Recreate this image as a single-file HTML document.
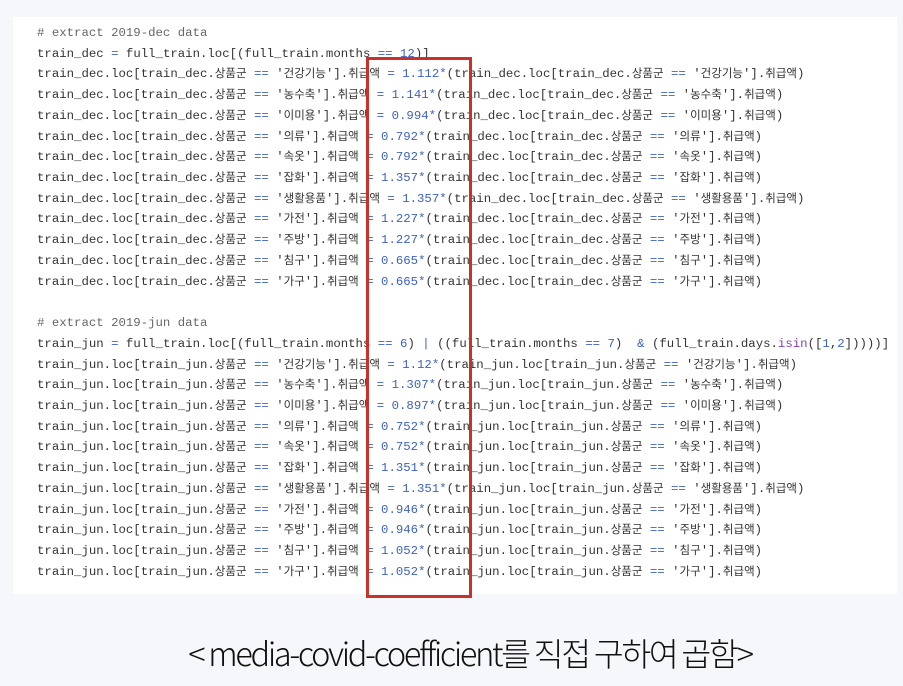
<!DOCTYPE html>
<html><head><meta charset="utf-8"><style>
html,body{margin:0;padding:0;}
body{width:903px;height:686px;background:#f6f7fa;position:relative;overflow:hidden;}
.panel{position:absolute;left:13px;top:17px;width:884px;height:577px;background:#fff;}
pre{position:absolute;left:37px;top:23px;margin:0;font-family:"Liberation Mono",monospace;font-size:12.35px;line-height:20.72px;color:#333;}
pre k{font-family:"Noto Sans CJK KR",sans-serif;font-size:11.5px;line-height:0;}
.o{color:#3d62c4}.c{color:#666}.p{color:#8a3fb0}
.box{position:absolute;left:366px;top:57px;width:100px;height:535px;border:3px solid #c9322a;}
.cap{position:absolute;left:0;width:940px;top:630px;text-align:center;font-family:"Noto Sans CJK KR",sans-serif;font-weight:300;font-size:32.5px;letter-spacing:-2.3px;color:#111;line-height:46px;}
</style></head><body>
<div class="panel"></div>
<pre><span class="c"># extract 2019-dec data</span>
train_dec <span class="o">=</span> full_train.loc[(full_train.months <span class="o">==</span> <span class="o">12</span>)]
train_dec.loc[train_dec.<k>상품군</k> <span class="o">==</span> '<k>건강기능</k>'].<k>취급액</k> <span class="o">=</span> <span class="o">1.112</span><span class="o">*</span>(train_dec.loc[train_dec.<k>상품군</k> <span class="o">==</span> '<k>건강기능</k>'].<k>취급액</k>)
train_dec.loc[train_dec.<k>상품군</k> <span class="o">==</span> '<k>농수축</k>'].<k>취급액</k> <span class="o">=</span> <span class="o">1.141</span><span class="o">*</span>(train_dec.loc[train_dec.<k>상품군</k> <span class="o">==</span> '<k>농수축</k>'].<k>취급액</k>)
train_dec.loc[train_dec.<k>상품군</k> <span class="o">==</span> '<k>이미용</k>'].<k>취급액</k> <span class="o">=</span> <span class="o">0.994</span><span class="o">*</span>(train_dec.loc[train_dec.<k>상품군</k> <span class="o">==</span> '<k>이미용</k>'].<k>취급액</k>)
train_dec.loc[train_dec.<k>상품군</k> <span class="o">==</span> '<k>의류</k>'].<k>취급액</k> <span class="o">=</span> <span class="o">0.792</span><span class="o">*</span>(train_dec.loc[train_dec.<k>상품군</k> <span class="o">==</span> '<k>의류</k>'].<k>취급액</k>)
train_dec.loc[train_dec.<k>상품군</k> <span class="o">==</span> '<k>속옷</k>'].<k>취급액</k> <span class="o">=</span> <span class="o">0.792</span><span class="o">*</span>(train_dec.loc[train_dec.<k>상품군</k> <span class="o">==</span> '<k>속옷</k>'].<k>취급액</k>)
train_dec.loc[train_dec.<k>상품군</k> <span class="o">==</span> '<k>잡화</k>'].<k>취급액</k> <span class="o">=</span> <span class="o">1.357</span><span class="o">*</span>(train_dec.loc[train_dec.<k>상품군</k> <span class="o">==</span> '<k>잡화</k>'].<k>취급액</k>)
train_dec.loc[train_dec.<k>상품군</k> <span class="o">==</span> '<k>생활용품</k>'].<k>취급액</k> <span class="o">=</span> <span class="o">1.357</span><span class="o">*</span>(train_dec.loc[train_dec.<k>상품군</k> <span class="o">==</span> '<k>생활용품</k>'].<k>취급액</k>)
train_dec.loc[train_dec.<k>상품군</k> <span class="o">==</span> '<k>가전</k>'].<k>취급액</k> <span class="o">=</span> <span class="o">1.227</span><span class="o">*</span>(train_dec.loc[train_dec.<k>상품군</k> <span class="o">==</span> '<k>가전</k>'].<k>취급액</k>)
train_dec.loc[train_dec.<k>상품군</k> <span class="o">==</span> '<k>주방</k>'].<k>취급액</k> <span class="o">=</span> <span class="o">1.227</span><span class="o">*</span>(train_dec.loc[train_dec.<k>상품군</k> <span class="o">==</span> '<k>주방</k>'].<k>취급액</k>)
train_dec.loc[train_dec.<k>상품군</k> <span class="o">==</span> '<k>침구</k>'].<k>취급액</k> <span class="o">=</span> <span class="o">0.665</span><span class="o">*</span>(train_dec.loc[train_dec.<k>상품군</k> <span class="o">==</span> '<k>침구</k>'].<k>취급액</k>)
train_dec.loc[train_dec.<k>상품군</k> <span class="o">==</span> '<k>가구</k>'].<k>취급액</k> <span class="o">=</span> <span class="o">0.665</span><span class="o">*</span>(train_dec.loc[train_dec.<k>상품군</k> <span class="o">==</span> '<k>가구</k>'].<k>취급액</k>)

<span class="c"># extract 2019-jun data</span>
train_jun <span class="o">=</span> full_train.loc[(full_train.months <span class="o">==</span> <span class="o">6</span>) <span class="o">|</span> ((full_train.months <span class="o">==</span> <span class="o">7</span>)  <span class="o">&amp;</span> (full_train.days.<span class="p">isin</span>([<span class="o">1</span>,<span class="o">2</span>]))))]
train_jun.loc[train_jun.<k>상품군</k> <span class="o">==</span> '<k>건강기능</k>'].<k>취급액</k> <span class="o">=</span> <span class="o">1.12</span><span class="o">*</span>(train_jun.loc[train_jun.<k>상품군</k> <span class="o">==</span> '<k>건강기능</k>'].<k>취급액</k>)
train_jun.loc[train_jun.<k>상품군</k> <span class="o">==</span> '<k>농수축</k>'].<k>취급액</k> <span class="o">=</span> <span class="o">1.307</span><span class="o">*</span>(train_jun.loc[train_jun.<k>상품군</k> <span class="o">==</span> '<k>농수축</k>'].<k>취급액</k>)
train_jun.loc[train_jun.<k>상품군</k> <span class="o">==</span> '<k>이미용</k>'].<k>취급액</k> <span class="o">=</span> <span class="o">0.897</span><span class="o">*</span>(train_jun.loc[train_jun.<k>상품군</k> <span class="o">==</span> '<k>이미용</k>'].<k>취급액</k>)
train_jun.loc[train_jun.<k>상품군</k> <span class="o">==</span> '<k>의류</k>'].<k>취급액</k> <span class="o">=</span> <span class="o">0.752</span><span class="o">*</span>(train_jun.loc[train_jun.<k>상품군</k> <span class="o">==</span> '<k>의류</k>'].<k>취급액</k>)
train_jun.loc[train_jun.<k>상품군</k> <span class="o">==</span> '<k>속옷</k>'].<k>취급액</k> <span class="o">=</span> <span class="o">0.752</span><span class="o">*</span>(train_jun.loc[train_jun.<k>상품군</k> <span class="o">==</span> '<k>속옷</k>'].<k>취급액</k>)
train_jun.loc[train_jun.<k>상품군</k> <span class="o">==</span> '<k>잡화</k>'].<k>취급액</k> <span class="o">=</span> <span class="o">1.351</span><span class="o">*</span>(train_jun.loc[train_jun.<k>상품군</k> <span class="o">==</span> '<k>잡화</k>'].<k>취급액</k>)
train_jun.loc[train_jun.<k>상품군</k> <span class="o">==</span> '<k>생활용품</k>'].<k>취급액</k> <span class="o">=</span> <span class="o">1.351</span><span class="o">*</span>(train_jun.loc[train_jun.<k>상품군</k> <span class="o">==</span> '<k>생활용품</k>'].<k>취급액</k>)
train_jun.loc[train_jun.<k>상품군</k> <span class="o">==</span> '<k>가전</k>'].<k>취급액</k> <span class="o">=</span> <span class="o">0.946</span><span class="o">*</span>(train_jun.loc[train_jun.<k>상품군</k> <span class="o">==</span> '<k>가전</k>'].<k>취급액</k>)
train_jun.loc[train_jun.<k>상품군</k> <span class="o">==</span> '<k>주방</k>'].<k>취급액</k> <span class="o">=</span> <span class="o">0.946</span><span class="o">*</span>(train_jun.loc[train_jun.<k>상품군</k> <span class="o">==</span> '<k>주방</k>'].<k>취급액</k>)
train_jun.loc[train_jun.<k>상품군</k> <span class="o">==</span> '<k>침구</k>'].<k>취급액</k> <span class="o">=</span> <span class="o">1.052</span><span class="o">*</span>(train_jun.loc[train_jun.<k>상품군</k> <span class="o">==</span> '<k>침구</k>'].<k>취급액</k>)
train_jun.loc[train_jun.<k>상품군</k> <span class="o">==</span> '<k>가구</k>'].<k>취급액</k> <span class="o">=</span> <span class="o">1.052</span><span class="o">*</span>(train_jun.loc[train_jun.<k>상품군</k> <span class="o">==</span> '<k>가구</k>'].<k>취급액</k>)</pre>
<div class="box"></div>
<div class="cap">&lt; media-covid-coefficient를 직접 구하여 곱함&gt;</div>
</body></html>
